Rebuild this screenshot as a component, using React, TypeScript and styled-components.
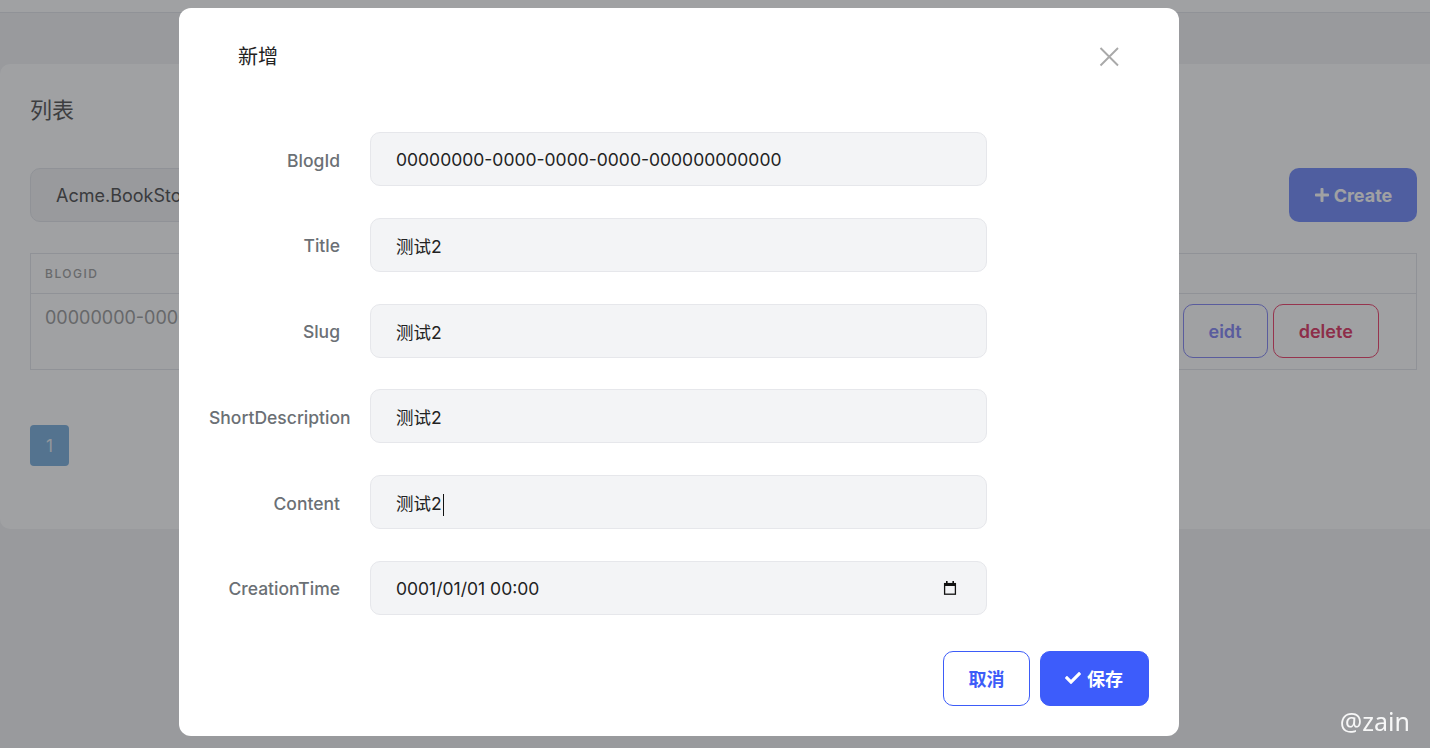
import React from "react";
import styled, { createGlobalStyle } from "styled-components";
import { FaCheck, FaPlus } from "react-icons/fa";

const GlobalStyle = createGlobalStyle`
  html, body {
    margin: 0;
    padding: 0;
    overflow: hidden;
    background: #f3f4f6;
    font-family: Inter, "Noto Sans CJK SC", sans-serif;
  }
  * { box-sizing: border-box; }
`;

const Page = styled.div`
  width: 1447px;
  height: 748px;
  background: #f3f4f6;
`;

const TopBar = styled.div`
  height: 13px;
  background: #ffffff;
  border-bottom: 1px solid #e5e7eb;
`;

const Main = styled.main`
  padding-top: 51px;
`;

const Card = styled.section`
  background: #ffffff;
  border-radius: 10px;
  padding: 30px 30px 63px;
`;

const CardTitle = styled.h2`
  margin: 0;
  font-size: 22px;
  line-height: 32px;
  font-weight: 400;
  color: #5b5b5b;
`;

const Toolbar = styled.div`
  margin-top: 42px;
  display: flex;
  align-items: center;
  justify-content: space-between;
`;

const SearchBox = styled.div`
  width: 900px;
  height: 54px;
  display: flex;
  align-items: center;
  padding: 0 25px;
  background: #f3f4f6;
  border: 1px solid #e5e7eb;
  border-radius: 10px;
  font-size: 18px;
  color: #555;
`;

const CreateButton = styled.button`
  height: 54px;
  width: 128px;
  border: none;
  border-radius: 10px;
  background: #7890fb;
  color: #fff;
  font-family: Inter, sans-serif;
  font-size: 18px;
  font-weight: 700;
  display: flex;
  align-items: center;
  justify-content: center;
  gap: 4px;
  svg { width: 16px; height: 16px; }
`;

const Table = styled.table`
  margin-top: 31px;
  width: 100%;
  border-collapse: collapse;
  border: 1px solid #e5e7eb;
`;

const Th = styled.th`
  height: 40px;
  padding: 0 14px;
  text-align: left;
  font-size: 12px;
  font-weight: 500;
  letter-spacing: 1.5px;
  text-transform: uppercase;
  color: #a3a3a3;
  border-bottom: 1px solid #e5e7eb;
`;

const Td = styled.td<{ $w?: number }>`
  padding: 10px 14px 11px;
  vertical-align: top;
  font-size: 18px;
  line-height: 28px;
  color: #a0a0a0;
  width: ${(p) => (p.$w ? `${p.$w}px` : "auto")};
`;

const Actions = styled.div`
  display: flex;
  gap: 5px;
`;

const OutlineButton = styled.button<{ $tone: "indigo" | "rose" }>`
  height: 54px;
  padding: 0 25px;
  background: transparent;
  border-radius: 10px;
  font-family: Inter, sans-serif;
  font-size: 18px;
  font-weight: 600;
  border: 1px solid ${(p) => (p.$tone === "indigo" ? "#8a8cf6" : "#ee4a72")};
  color: ${(p) => (p.$tone === "indigo" ? "#8a8cf6" : "#e0406a")};
`;

const Pagination = styled.nav`
  margin-top: 55px;
  display: flex;
`;

const PageButton = styled.span`
  width: 39px;
  height: 41px;
  border-radius: 4px;
  background: #80b2de;
  color: #e8eef3;
  font-size: 17px;
  display: flex;
  align-items: center;
  justify-content: center;
`;

const Overlay = styled.div`
  position: fixed;
  inset: 0;
  background: rgba(18, 20, 24, 0.4);
  display: flex;
  justify-content: center;
  align-items: flex-start;
  padding: 8px 72px 0 0;
`;

const Modal = styled.div`
  width: 1000px;
  background: #ffffff;
  border-radius: 12px;
  padding: 36px 30px 30px;
  display: flex;
  flex-direction: column;
`;

const ModalHeader = styled.div`
  display: flex;
  align-items: center;
  justify-content: space-between;
  padding: 0 30px 0 29px;
  height: 24px;
`;

const ModalTitle = styled.h3`
  margin: 0;
  font-size: 20px;
  line-height: 24px;
  font-weight: 400;
  color: #222;
  position: relative;
  top: 1px;
`;

const CloseButton = styled.button`
  width: 20px;
  height: 20px;
  padding: 0;
  border: none;
  background: transparent;
  display: flex;
  align-items: center;
  justify-content: center;
  margin-top: 2px;
`;

const Form = styled.form`
  margin-top: 64px;
  display: grid;
  grid-template-columns: 131px 617px;
  column-gap: 30px;
  row-gap: 31.8px;
  align-items: center;
`;

const Label = styled.label`
  text-align: right;
  white-space: nowrap;
  font-size: 17.5px;
  font-weight: 500;
  color: #6b7075;
  padding-top: 2px;
`;

const Field = styled.div`
  height: 54px;
  display: flex;
  align-items: center;
  padding: 0 29px 0 25px;
  background: #f3f4f6;
  border: 1px solid #e6e7eb;
  border-radius: 10px;
  font-size: 17.5px;
  color: #222;
`;

const FieldText = styled.span`
  flex: 1;
  white-space: nowrap;
  padding-top: 1px;
`;

const Caret = styled.span`
  display: inline-block;
  width: 1px;
  height: 22px;
  background: #111;
  vertical-align: middle;
  margin-left: 1px;
`;

const Footer = styled.div`
  margin-top: 36px;
  display: flex;
  justify-content: flex-end;
  gap: 10px;
`;

const FooterButton = styled.button<{ $primary?: boolean }>`
  height: 55px;
  padding: ${(p) => (p.$primary ? "0 25px 0 24px" : "0 24.5px")};
  border-radius: 10px;
  font-family: Inter, "Noto Sans CJK SC", sans-serif;
  font-size: 18px;
  font-weight: 700;
  display: flex;
  align-items: center;
  gap: 6px;
  border: 1px solid #3d5cf8;
  background: ${(p) => (p.$primary ? "#3d5cfb" : "#ffffff")};
  color: ${(p) => (p.$primary ? "#ffffff" : "#3d5cf8")};
  svg { width: 16px; height: 16px; }
`;

const Watermark = styled.div`
  position: fixed;
  right: 20px;
  bottom: 12px;
  font-family: "Noto Sans", sans-serif;
  font-size: 25px;
  line-height: 30px;
  color: rgba(255, 255, 255, 0.92);
`;

const CloseIcon = () => (
  <svg width="20" height="20" viewBox="0 0 20 20">
    <path d="M1.5 1 L19 18.5 M19 1 L1.5 18.5" stroke="#a9a9a9" strokeWidth="1.9" fill="none" />
  </svg>
);

const CalendarIcon = () => (
  <svg width="14" height="14" viewBox="0 0 14 14">
    <rect x="3" y="0" width="1.6" height="3" fill="#111" />
    <rect x="9.4" y="0" width="1.6" height="3" fill="#111" />
    <rect x="1.6" y="2.6" width="10.8" height="10.6" fill="none" stroke="#111" strokeWidth="1.3" />
    <rect x="1" y="2" width="12" height="3" fill="#111" />
  </svg>
);

const fields: { label: string; value: string; caret?: boolean; date?: boolean }[] = [
  { label: "BlogId", value: "00000000-0000-0000-0000-000000000000" },
  { label: "Title", value: "测试2" },
  { label: "Slug", value: "测试2" },
  { label: "ShortDescription", value: "测试2" },
  { label: "Content", value: "测试2", caret: true },
  { label: "CreationTime", value: "0001/01/01 00:00", date: true },
];

export default function App() {
  return (
    <>
      <GlobalStyle />
      <Page>
        <TopBar />
        <Main>
          <Card>
            <CardTitle>列表</CardTitle>
            <Toolbar>
              <SearchBox>Acme.BookStore.Blogs</SearchBox>
              <CreateButton>
                <FaPlus />
                Create
              </CreateButton>
            </Toolbar>
            <Table>
              <thead>
                <tr>
                  <Th>BlogId</Th>
                  <Th />
                </tr>
              </thead>
              <tbody>
                <tr>
                  <Td>00000000-0000-0000-0000-000000000000</Td>
                  <Td $w={248}>
                    <Actions>
                      <OutlineButton $tone="indigo">eidt</OutlineButton>
                      <OutlineButton $tone="rose">delete</OutlineButton>
                    </Actions>
                  </Td>
                </tr>
              </tbody>
            </Table>
            <Pagination>
              <PageButton>1</PageButton>
            </Pagination>
          </Card>
        </Main>
      </Page>
      <Overlay>
        <Modal>
          <ModalHeader>
            <ModalTitle>新增</ModalTitle>
            <CloseButton aria-label="close">
              <CloseIcon />
            </CloseButton>
          </ModalHeader>
          <Form>
            {fields.map((f) => (
              <React.Fragment key={f.label}>
                <Label>{f.label}</Label>
                <Field>
                  <FieldText>
                    {f.value}
                    {f.caret && <Caret />}
                  </FieldText>
                  {f.date && <CalendarIcon />}
                </Field>
              </React.Fragment>
            ))}
          </Form>
          <Footer>
            <FooterButton type="button">取消</FooterButton>
            <FooterButton type="button" $primary>
              <FaCheck />
              保存
            </FooterButton>
          </Footer>
        </Modal>
      </Overlay>
      <Watermark>@zain</Watermark>
    </>
  );
}
